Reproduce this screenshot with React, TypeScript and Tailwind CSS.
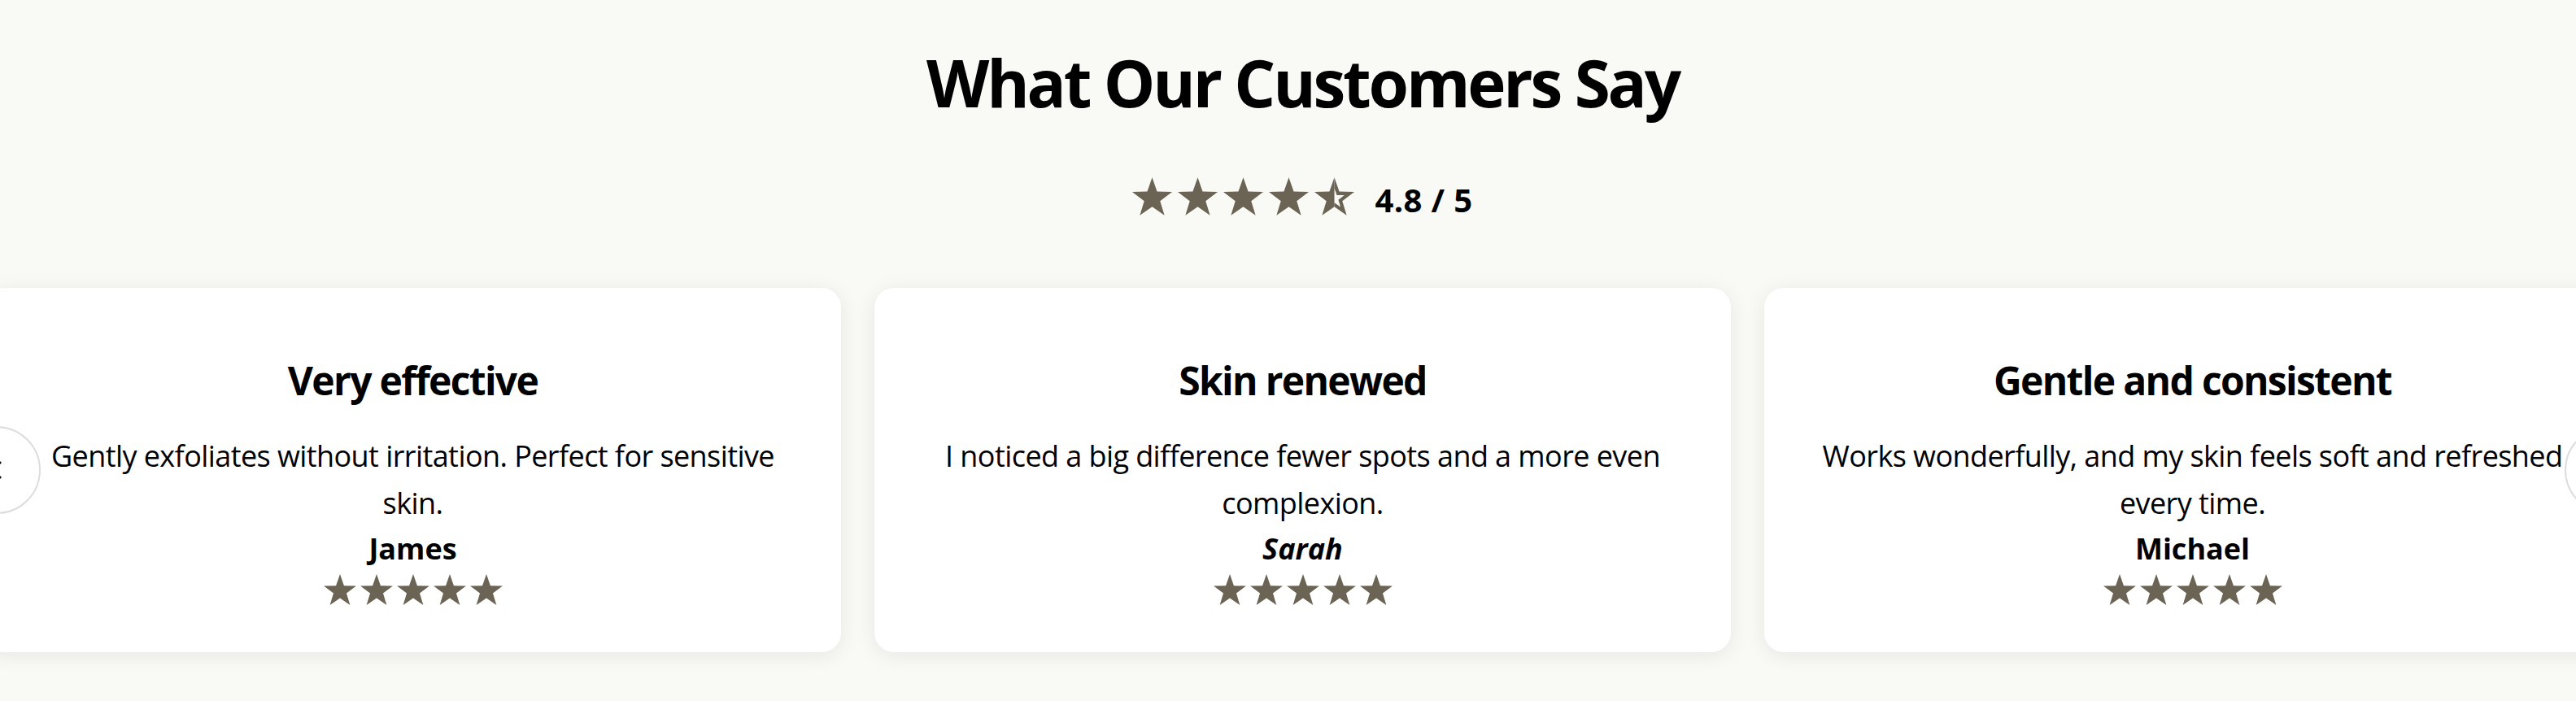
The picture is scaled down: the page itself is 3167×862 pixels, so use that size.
import React from "react";

const STAR_POINTS =
  "12,2 14.47,9.10 21.99,9.26 15.99,13.80 18.17,20.99 12,16.7 5.83,20.99 8.01,13.80 2.01,9.26 9.53,9.10";

const OUTER = "M12 2L14.47 9.10L21.99 9.26L15.99 13.80L18.17 20.99L12 16.7L5.83 20.99L8.01 13.80L2.01 9.26L9.53 9.10Z";
// inner star scaled by 0.5 around (12, 12.6)
const INNER = "M12 7.3L13.24 10.85L17 10.93L14 13.2L15.09 16.8L12 14.65L8.92 16.8L10 13.2L7 10.93L10.77 10.85Z";

function Star({ className }: { className: string }) {
  return (
    <svg viewBox="2 2 20 19" className={className} fill="#6b6455">
      <polygon points={STAR_POINTS} />
    </svg>
  );
}

function HalfStar({ className }: { className: string }) {
  return (
    <svg viewBox="2 2 20 19" className={className}>
      <defs>
        <clipPath id="lefthalf">
          <rect x="0" y="0" width="12" height="24" />
        </clipPath>
        <clipPath id="righthalf">
          <rect x="12" y="0" width="12" height="24" />
        </clipPath>
      </defs>
      <path d={OUTER} fill="#6b6455" clipPath="url(#lefthalf)" />
      <path d={OUTER + INNER} fill="#6b6455" fillRule="evenodd" clipPath="url(#righthalf)" />
    </svg>
  );
}

const reviews = [
  {
    title: "Very effective",
    body: "Gently exfoliates without irritation. Perfect for sensitive skin.",
    name: "James",
    italic: false,
  },
  {
    title: "Skin renewed",
    body: "I noticed a big difference fewer spots and a more even complexion.",
    name: "Sarah",
    italic: true,
  },
  {
    title: "Gentle and consistent",
    body: "Works wonderfully, and my skin feels soft and refreshed every time.",
    name: "Michael",
    italic: false,
  },
];

function Card({ r }: { r: (typeof reviews)[number] }) {
  return (
    <div className="w-[1053px] h-[448px] shrink-0 rounded-3xl bg-white shadow-[0_4px_26px_rgba(0,0,0,0.08)] px-[62px] pt-[85px] flex flex-col items-center text-center text-black">
      <h3 className="text-[48px] font-bold leading-[58px] tracking-[-0.035em]">{r.title}</h3>
      <p className="mt-[35px] text-[36px] leading-[57.6px] tracking-[-0.016em]">{r.body}</p>
      <p
        className={
          "mt-[6px] text-[36px] font-bold leading-[43px] " + (r.italic ? "italic" : "")
        }
      >
        {r.name}
      </p>
      <div className="mt-[10px] flex gap-[5px]">
        {[0, 1, 2, 3, 4].map((i) => (
          <Star key={i} className="w-[40px] h-[38px]" />
        ))}
      </div>
    </div>
  );
}

function Chevron({ dir }: { dir: "left" | "right" }) {
  return (
    <svg viewBox="0 0 14 24" className="w-[14px] h-[24px]" fill="none" stroke="#111" strokeWidth="3">
      {dir === "left" ? <polyline points="12,2 2,12 12,22" /> : <polyline points="2,2 12,12 2,22" />}
    </svg>
  );
}

export default function App() {
  return (
    <section className="w-full min-h-[862px] overflow-hidden bg-[#f9f9f6] pl-[36px] font-['Open_Sans','Noto_Sans',sans-serif] text-black">
      <h1 className="pt-[61px] text-center text-[80px] font-bold leading-[80px] tracking-[-0.04em]">
        What Our Customers Say
      </h1>
      <div className="mt-[76px] flex justify-center items-end h-[48px]">
        <div className="flex gap-[7px]">
          <Star className="w-[49px] h-[47px]" />
          <Star className="w-[49px] h-[47px]" />
          <Star className="w-[49px] h-[47px]" />
          <Star className="w-[49px] h-[47px]" />
          <HalfStar className="w-[49px] h-[47px]" />
        </div>
        <span className="ml-[25px] text-[40px] font-bold leading-[38px] tracking-[0.01em]">4.8 / 5</span>
      </div>
      <div className="mt-[89px] flex justify-center">
        <div className="relative flex shrink-0 gap-[41px]">
          {reviews.map((r) => (
            <Card key={r.title} r={r} />
          ))}
          <button className="absolute left-[-39px] top-1/2 -translate-y-1/2 w-[108px] h-[108px] rounded-full border-2 border-[#dddddd] bg-white flex items-center justify-center">
            <Chevron dir="left" />
          </button>
          <button className="absolute right-[-39px] top-1/2 -translate-y-1/2 w-[108px] h-[108px] rounded-full border-2 border-[#dddddd] bg-white flex items-center justify-center">
            <Chevron dir="right" />
          </button>
        </div>
      </div>
    </section>
  );
}
